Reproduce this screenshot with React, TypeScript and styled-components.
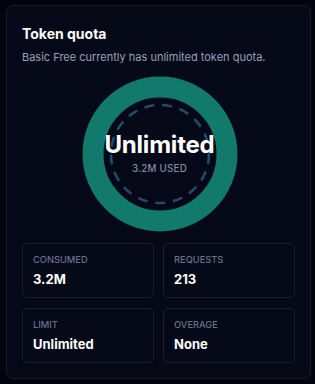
import styled, { createGlobalStyle } from 'styled-components';

const GlobalStyle = createGlobalStyle`
  html, body {
    margin: 0;
    padding: 0;
    background: #03050e;
  }
  body {
    font-family: Inter, "Noto Sans", sans-serif;
    color: #ffffff;
  }
`;

interface IStat {
  label: string;
  value: string;
}

const stats: IStat[] = [
  { label: 'Consumed', value: '3.2M' },
  { label: 'Requests', value: '213' },
  { label: 'Limit', value: 'Unlimited' },
  { label: 'Overage', value: 'None' },
];

export default function App() {
  return (
    <>
      <GlobalStyle />
      <Page>
        <Card>
          <Title>Token quota</Title>
          <Subtitle>Basic Free currently has unlimited token quota.</Subtitle>

          <GaugeWrap>
            <svg width="156" height="156" viewBox="0 0 156 156">
              <circle cx="78" cy="78" r="67" fill="none" stroke="#117a6c" strokeWidth="21" />
              <circle
                cx="78"
                cy="78"
                r="49"
                fill="none"
                stroke="#1f4b6b"
                strokeWidth="2.6"
                strokeDasharray="10 7.9"
              />
            </svg>
            <GaugeLabel>
              <GaugeValue>Unlimited</GaugeValue>
              <GaugeSub>3.2M USED</GaugeSub>
            </GaugeLabel>
          </GaugeWrap>

          <StatGrid>
            {stats.map(stat => (
              <StatBox key={stat.label}>
                <StatLabel>{stat.label}</StatLabel>
                <StatValue>{stat.value}</StatValue>
              </StatBox>
            ))}
          </StatGrid>
        </Card>
      </Page>
    </>
  );
}

const Page = styled.div`
  width: 315px;
  height: 384px;
  padding: 5px 4px 5px 6px;
  box-sizing: border-box;
`;

const Card = styled.div`
  width: 305px;
  height: 374px;
  box-sizing: border-box;
  background: #050817;
  border: 1px solid #171d2e;
  border-radius: 7px;
  padding: 18px 15px 0 15px;
  display: flex;
  flex-direction: column;
`;

const Title = styled.h2`
  margin: 0;
  font-size: 14px;
  font-weight: 700;
  line-height: 20px;
  color: #ffffff;
`;

const Subtitle = styled.p`
  margin: 5px 0 0 0;
  font-size: 11px;
  line-height: 17px;
  color: #95a2bb;
`;

const GaugeWrap = styled.div`
  position: relative;
  align-self: center;
  width: 156px;
  height: 156px;
  margin-top: 10px;
  margin-left: 2px;

  svg {
    display: block;
  }
`;

const GaugeLabel = styled.div`
  position: absolute;
  inset: 0;
  display: flex;
  flex-direction: column;
  align-items: center;
  justify-content: center;
`;

const GaugeValue = styled.div`
  margin-top: -2px;
  font-size: 24px;
  font-weight: 700;
  line-height: 28px;
  color: #ffffff;
  letter-spacing: -0.2px;
`;

const GaugeSub = styled.div`
  margin-top: 4px;
  font-size: 9.8px;
  font-weight: 500;
  line-height: 12px;
  color: #7f8aa3;
  letter-spacing: 0.2px;
`;

const StatGrid = styled.div`
  display: grid;
  grid-template-columns: 1fr 1fr;
  gap: 10px 9px;
  margin-top: 11px;
`;

const StatBox = styled.div`
  height: 55px;
  box-sizing: border-box;
  border: 1px solid #1a2032;
  border-radius: 5px;
  padding: 10px 10px 0 10px;
`;

const StatLabel = styled.div`
  font-size: 9.3px;
  font-weight: 500;
  line-height: 12px;
  text-transform: uppercase;
  color: #66738d;
`;

const StatValue = styled.div`
  margin-top: 5px;
  font-size: 13px;
  font-weight: 700;
  line-height: 16px;
  color: #ffffff;
`;
